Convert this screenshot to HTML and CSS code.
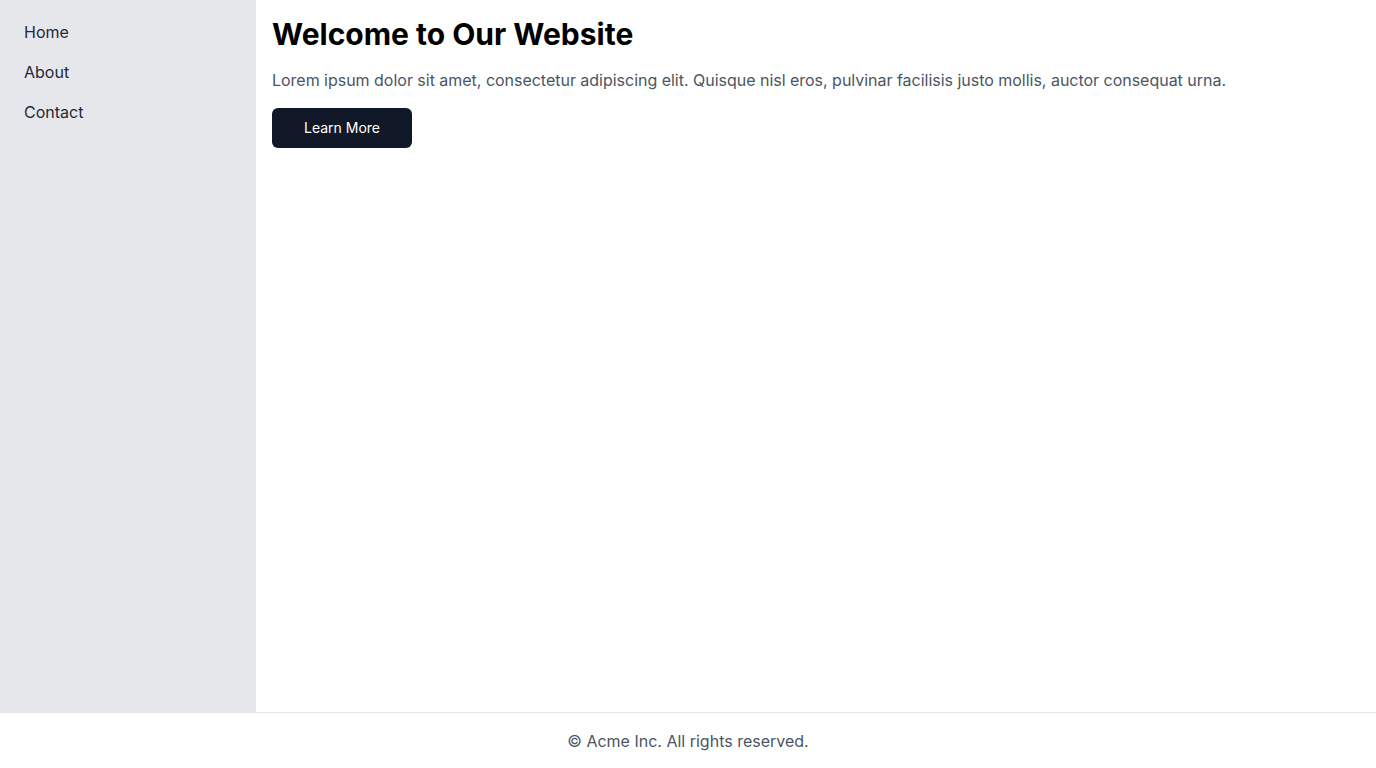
FILE: index.html
```
<!DOCTYPE html>
<html lang="en">
<head>
<meta charset="utf-8">
<title>Welcome</title>
<link rel="stylesheet" href="styles.css">
</head>
<body>
<div class="page">
  <div class="content-row">
    <aside class="sidebar">
      <nav class="nav">
        <a class="nav-link" href="#">Home</a>
        <a class="nav-link" href="#">About</a>
        <a class="nav-link" href="#">Contact</a>
      </nav>
    </aside>
    <main class="main">
      <h1 class="title">Welcome to Our Website</h1>
      <p class="lead">Lorem ipsum dolor sit amet, consectetur adipiscing elit. Quisque nisl eros, pulvinar facilisis justo mollis, auctor consequat urna.</p>
      <button class="btn" type="button">Learn More</button>
    </main>
  </div>
  <footer class="footer">© Acme Inc. All rights reserved.</footer>
</div>
</body>
</html>
```
FILE: styles.css
```
* { box-sizing: border-box; }
html, body { margin: 0; padding: 0; }
body {
  font-family: Inter, "Noto Sans", sans-serif;
  color: #111827;
  background: #ffffff;
}
.page {
  display: flex;
  flex-direction: column;
  height: 100vh;
}
.content-row {
  flex: 1;
  display: flex;
  min-height: 0;
}
.sidebar {
  width: 256px;
  flex-shrink: 0;
  background: #e5e7eb;
}
.nav {
  display: flex;
  flex-direction: column;
  gap: 8px;
  padding: 16px;
}
.nav-link {
  display: block;
  padding: 4px 8px;
  font-size: 16px;
  line-height: 24px;
  color: #1f2937;
  text-decoration: none;
}
.main {
  flex: 1;
  padding: 16px;
}
.title {
  margin: 0 0 16px;
  font-size: 30px;
  line-height: 36px;
  font-weight: 700;
  color: #000000;
}
.lead {
  margin: 0 0 16px;
  font-size: 16px;
  line-height: 24px;
  letter-spacing: -0.02px;
  color: #4b5563;
}
.btn {
  width: 140px;
  height: 40px;
  padding: 0;
  border: none;
  border-radius: 6px;
  background: #111827;
  color: #ffffff;
  font-family: inherit;
  font-size: 14px;
  font-weight: 400;
  line-height: 20px;
  cursor: pointer;
}
.footer {
  height: 56px;
  flex-shrink: 0;
  display: flex;
  align-items: center;
  justify-content: center;
  border-top: 1px solid #e5e7eb;
  background: #ffffff;
  box-shadow: inset 0 3px 3px -2px rgba(0,0,0,0.02);
  font-size: 16px;
  line-height: 24px;
  color: #4b5563;
}
```
